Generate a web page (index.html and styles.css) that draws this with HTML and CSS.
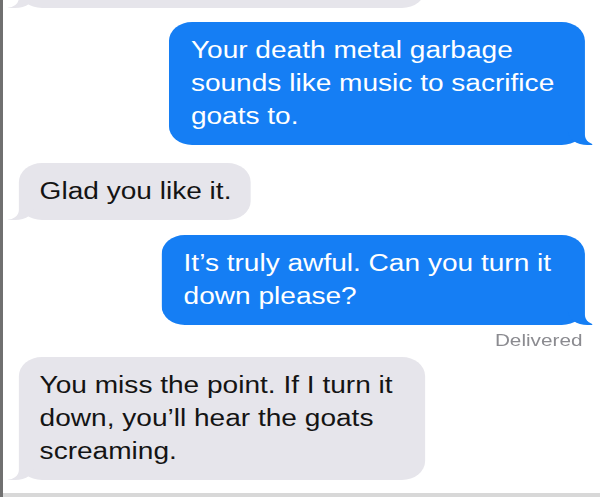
FILE: index.html
```html
<!DOCTYPE html>
<html lang="en">
<head>
<meta charset="utf-8">
<title>Messages</title>
<link rel="stylesheet" href="styles.css">
</head>
<body>
<div class="screen">
  <div class="thread">
    <div class="bubble received clipped">&nbsp;</div>
    <div class="bubble sent first">Your death metal garbage sounds like music to sacrifice goats to.</div>
    <div class="bubble received glad">Glad you like it.</div>
    <div class="bubble sent second">It’s truly awful. Can you turn it down please?</div>
    <div class="status">Delivered</div>
    <div class="bubble received last">You miss the point. If I turn it down, you’ll hear the goats screaming.</div>
  </div>
  <div class="bottom-line"></div>
</div>
</body>
</html>
```
FILE: styles.css
```css
html, body {
  margin: 0;
  padding: 0;
  background: #ffffff;
}

.screen {
  width: 600px;
  height: 497px;
  box-sizing: border-box;
  border-left: 3px solid #707070;
  display: flex;
  flex-direction: column;
  overflow: hidden;
  background: #ffffff;
}

.thread {
  width: 489px;
  transform: scaleX(1.22);
  transform-origin: 0 0;
  display: flex;
  flex-direction: column;
  overflow: hidden;
  font-family: "Liberation Sans", Arial, sans-serif;
  font-size: 23px;
  line-height: 33px;
  flex: 1 1 auto;
}

.bubble {
  position: relative;
  max-width: 320px;
  width: fit-content;
  padding: 12px 19px 12px 17px;
  border-radius: 19px;
}

.bubble::before,
.bubble::after {
  content: "";
  position: absolute;
  bottom: 0;
  height: 22px;
}

.sent {
  align-self: flex-end;
  margin-right: 12px;
  background: #157ef4;
  color: #ffffff;
  padding-left: 18px;
  padding-right: 23px;
}

.sent::before {
  right: -6px;
  width: 20px;
  background: #157ef4;
  border-bottom-left-radius: 16px 14px;
  z-index: 0;
}

.sent::after {
  right: -14px;
  width: 14px;
  background: #ffffff;
  border-bottom-left-radius: 10px;
  z-index: 1;
}

.received {
  align-self: flex-start;
  margin-left: 13px;
  background: #e6e5eb;
  color: #141414;
}

.received::before {
  left: -9px;
  width: 22px;
  background: #e6e5eb;
  border-bottom-right-radius: 16px 14px;
  z-index: 0;
}

.received::after {
  left: -16px;
  width: 16px;
  background: #ffffff;
  border-bottom-right-radius: 10px;
  z-index: 1;
}

.clipped {
  width: 333px;
  max-width: none;
  box-sizing: border-box;
  height: 40px;
  margin-top: -32px;
}

.first {
  margin-top: 14px;
  max-width: 300px;
}

.glad {
  margin-top: 18px;
  padding-right: 16px;
}

.second {
  margin-top: 15px;
  max-width: 306px;
}

.status {
  align-self: flex-end;
  margin-top: 6px;
  margin-right: 14px;
  font-size: 17px;
  line-height: 20px;
  color: #8b8b90;
}

.last {
  margin-top: 6px;
  max-width: 297px;
}

.bottom-line {
  height: 4px;
  flex: 0 0 4px;
  background: #d8d8d8;
}
```
